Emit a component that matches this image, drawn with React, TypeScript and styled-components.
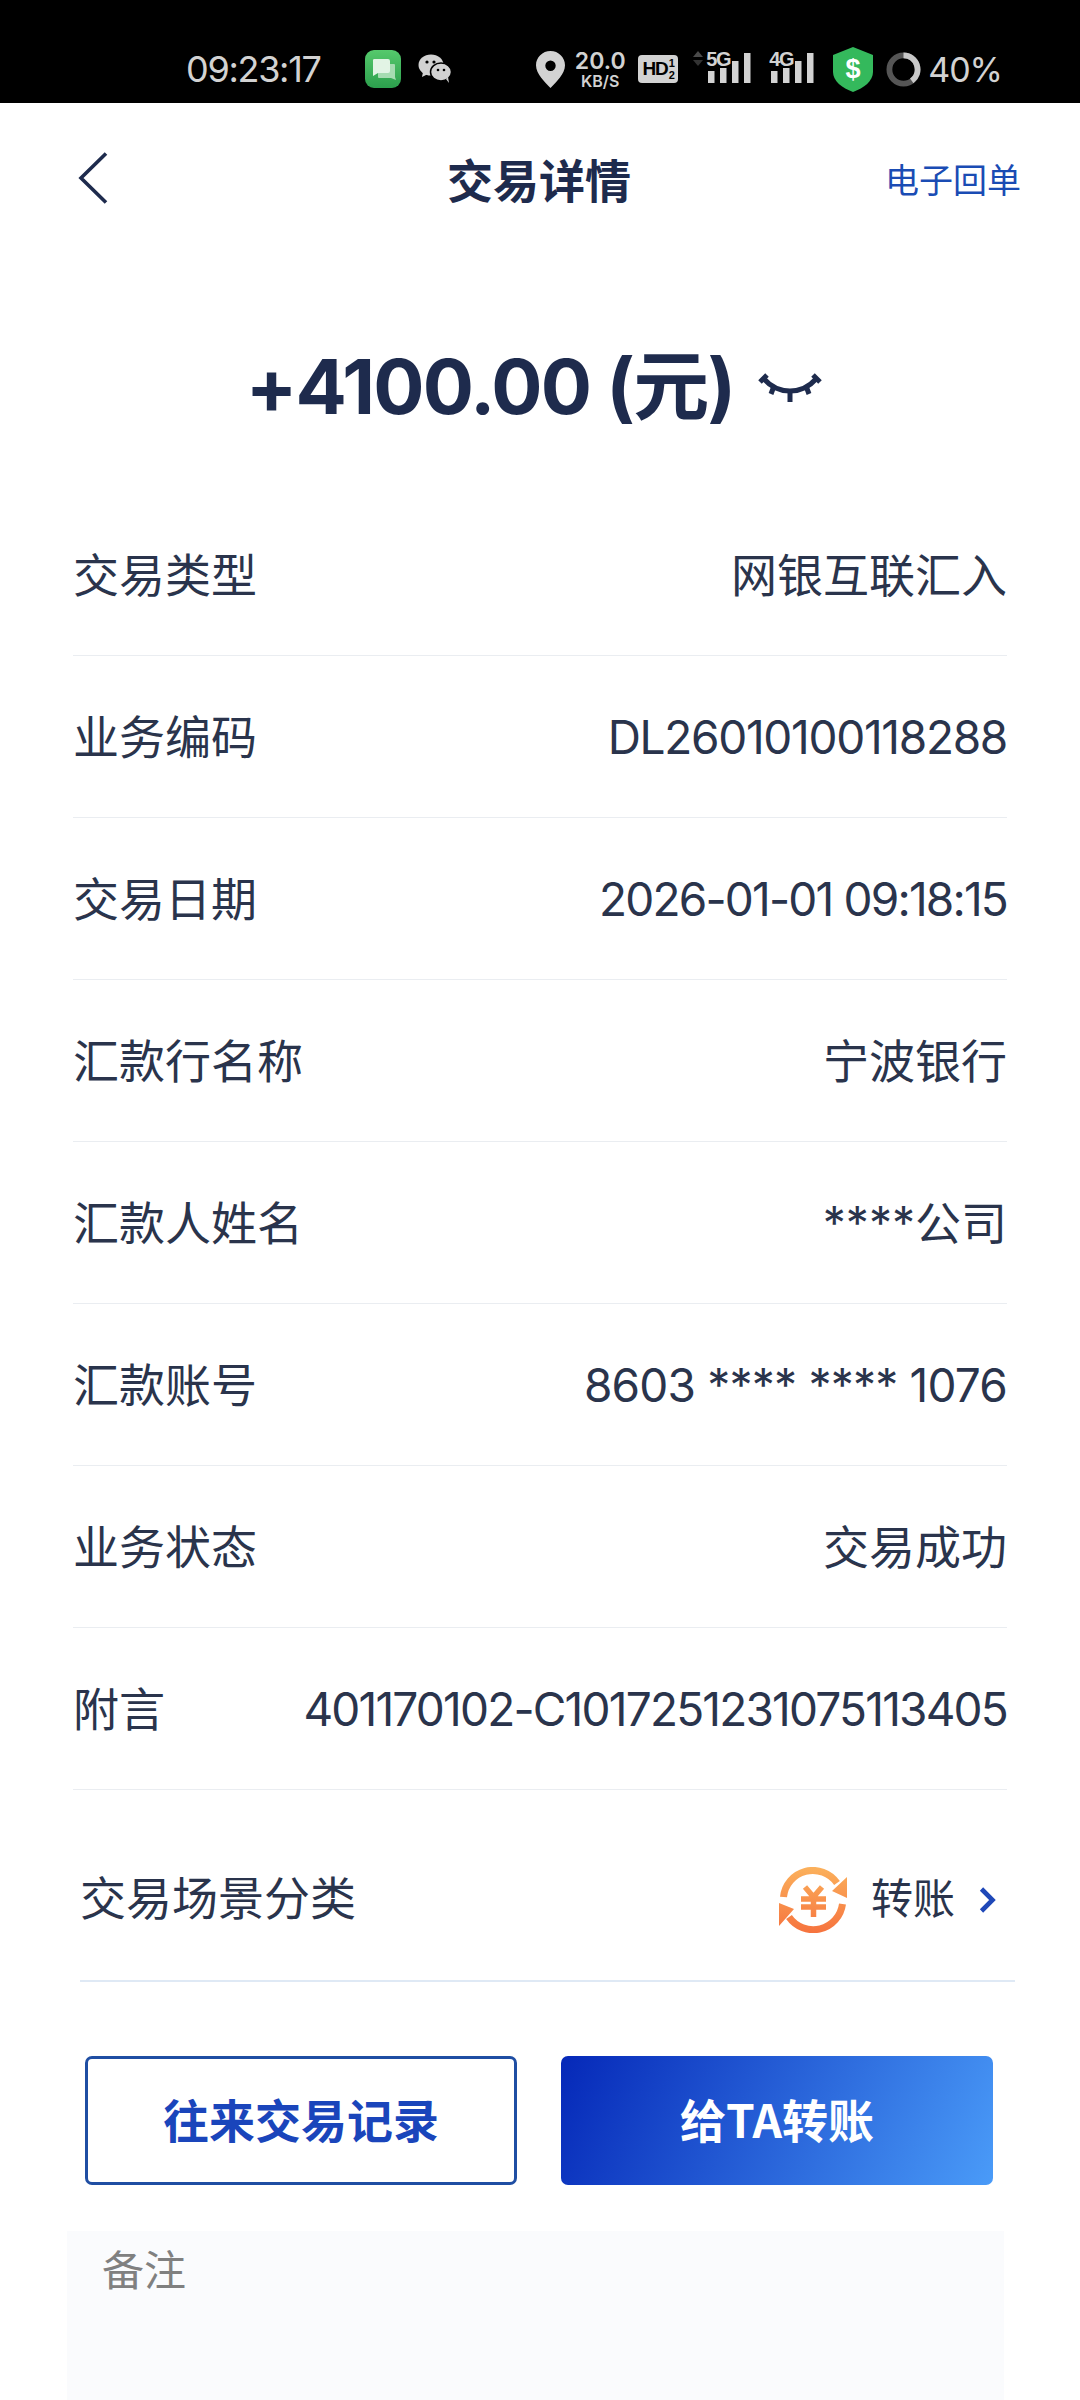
import React from 'react';
import styled, { createGlobalStyle } from 'styled-components';

const GlobalStyle = createGlobalStyle`
  html, body {
    margin: 0;
    padding: 0;
    background: #ffffff;
  }
  body {
    font-family: Roboto, "Noto Sans CJK SC", sans-serif;
  }
`;

const Page = styled.div`
  width: 1080px;
  height: 2400px;
  overflow: hidden;
  background: #ffffff;
  display: flex;
  flex-direction: column;
`;

const StatusBar = styled.div`
  height: 103px;
  flex: none;
  background: #000000;
  color: #d2d2d2;
  display: flex;
  align-items: center;
  justify-content: space-between;
  padding: 35px 78px 0 186px;
  box-sizing: border-box;
`;

const StatusGroup = styled.div`
  display: flex;
  align-items: center;
`;

const Clock = styled.span`
  font-family: Inter, sans-serif;
  font-size: 36px;
  letter-spacing: -1.3px;
  width: 179px;
`;

const Speed = styled.div`
  display: flex;
  flex-direction: column;
  align-items: center;
  width: 50px;
  margin: 0 13px 0 10px;
  font-family: Inter, sans-serif;
  font-weight: 600;
  line-height: 1;
`;

const SpeedValue = styled.span`
  font-size: 23px;
`;

const SpeedUnit = styled.span`
  font-size: 16px;
`;

const HdBadge = styled.div`
  width: 40px;
  height: 28px;
  border-radius: 4px;
  background: #d2d2d2;
  color: #000000;
  font-family: "Liberation Sans", sans-serif;
  font-weight: 700;
  letter-spacing: -1px;
  display: flex;
  align-items: center;
  justify-content: center;
  gap: 1px;
  margin-right: 15px;
`;

const HdText = styled.span`
  font-size: 19px;
`;

const HdFraction = styled.span`
  display: flex;
  flex-direction: column;
  align-items: center;
  font-size: 11px;
  line-height: 12px;
`;

const Signal = styled.div<{ $width: number }>`
  position: relative;
  width: ${(p) => p.$width}px;
  height: 32px;
  margin-right: 17px;
  top: -2px;
`;

const SignalLabel = styled.span`
  position: absolute;
  left: ${(p: { $left: number }) => p.$left}px;
  top: -1px;
  font-family: "Liberation Sans", sans-serif;
  font-size: 20px;
  font-weight: 700;
  letter-spacing: -1.2px;
  line-height: 18px;
`;

const Battery = styled.span`
  font-family: Inter, sans-serif;
  font-size: 34px;
  letter-spacing: -1px;
  margin-left: 7px;
`;

const NavBar = styled.div`
  height: 152px;
  flex: none;
  display: grid;
  grid-template-columns: 1fr auto 1fr;
  align-items: center;
  padding: 0 59px 2px 57px;
  box-sizing: border-box;
  color: #1e2b4d;
`;

const BackButton = styled.div`
  display: flex;
  align-items: center;
  padding-left: 21px;
`;

const NavTitle = styled.div`
  font-family: "Noto Sans CJK SC", sans-serif;
  font-size: 46px;
  font-weight: 700;
`;

const NavAction = styled.div`
  justify-self: end;
  font-family: "Noto Sans CJK SC", sans-serif;
  font-size: 34px;
  color: #1a4cb4;
`;

const Amount = styled.div`
  height: 239px;
  box-sizing: border-box;
  padding: 13px 12px 0 0;
  flex: none;
  display: flex;
  align-items: center;
  justify-content: center;
  gap: 24px;
  color: #1e2b4d;
`;

const AmountText = styled.span`
  font-family: Inter, "Noto Sans CJK SC", sans-serif;
  font-size: 76px;
  font-weight: 700;
  letter-spacing: -1.8px;
`;

const List = styled.div`
  padding: 0 73px;
`;

const Row = styled.div`
  height: 162px;
  box-sizing: border-box;
  display: flex;
  align-items: center;
  justify-content: space-between;
  border-bottom: 1px solid #eaedf1;
  color: #2a344c;
  font-size: 46px;
  font-family: Inter, "Noto Sans CJK SC", sans-serif;
`;

const RowLabel = styled.span`
  margin-bottom: 5px;
`;

const RowValue = styled.span<{ $tight: number; $raised: boolean }>`
  letter-spacing: ${(p) => p.$tight}px;
  margin-bottom: ${(p) => (p.$raised ? 5 : 0)}px;
`;

const SceneRow = styled.div`
  height: 192px;
  box-sizing: border-box;
  margin: 0 65px 0 80px;
  padding-top: 20px;
  display: flex;
  align-items: center;
  justify-content: space-between;
  border-bottom: 2px solid #dfe9f5;
  color: #2a344c;
  font-size: 46px;
  font-family: "Noto Sans CJK SC", sans-serif;
`;

const SceneValue = styled.div`
  display: flex;
  align-items: center;
  margin-right: 19px;
`;

const SceneName = styled.span`
  font-size: 42px;
  margin: 0 24px;
`;

const Actions = styled.div`
  display: flex;
  justify-content: space-between;
  margin: 74px 87px 0 85px;
`;

const ActionButton = styled.div<{ $primary?: boolean }>`
  width: 432px;
  height: 129px;
  box-sizing: border-box;
  border-radius: 7px;
  padding-bottom: 5px;
  display: flex;
  align-items: center;
  justify-content: center;
  font-family: "Noto Sans CJK SC", sans-serif;
  font-size: 46px;
  font-weight: 700;
  color: ${(p) => (p.$primary ? '#ffffff' : '#1a45bb')};
  background: ${(p) => (p.$primary ? 'linear-gradient(115deg, #0528b8 0%, #4a9bf8 100%)' : '#ffffff')};
  border: ${(p) => (p.$primary ? 'none' : '3px solid #1f4ea3')};
`;

const Remark = styled.div`
  flex: 1;
  margin: 46px 76px 0 67px;
  padding: 6px 35px;
  background: #fafbfd;
  color: #808080;
  font-family: "Noto Sans CJK SC", sans-serif;
  font-size: 42px;
`;

const rows: { label: string; value: string; tight: number; raised: boolean }[] = [
  { label: '交易类型', value: '网银互联汇入', tight: 0, raised: true },
  { label: '业务编码', value: 'DL26010100118288', tight: -1.3, raised: false },
  { label: '交易日期', value: '2026-01-01 09:18:15', tight: -1.8, raised: false },
  { label: '汇款行名称', value: '宁波银行', tight: 0, raised: true },
  { label: '汇款人姓名', value: '****公司', tight: 0, raised: true },
  { label: '汇款账号', value: '8603 **** **** 1076', tight: -0.8, raised: false },
  { label: '业务状态', value: '交易成功', tight: 0, raised: true },
  { label: '附言', value: '401170102-C1017251231075113405', tight: -1.8, raised: false },
];

const MessagesIcon = () => (
  <svg width="36" height="38" viewBox="0 0 36 38" style={{ marginRight: 17 }}>
    <defs>
      <linearGradient id="msgBg" x1="0" y1="0" x2="0" y2="1">
        <stop offset="0" stopColor="#55c96c" />
        <stop offset="1" stopColor="#2c9f4d" />
      </linearGradient>
    </defs>
    <rect width="36" height="38" rx="9" fill="url(#msgBg)" />
    <path d="M13 14h16a1 1 0 0 1 1 1v12l1 3-5-2H14a1 1 0 0 1-1-1z" fill="#a6dcb2" />
    <path d="M9 9h14a2 2 0 0 1 2 2v10a2 2 0 0 1-2 2H13l-5 3 0-4V11a1.500 1.500 0 0 1 1-2z" fill="#e2f4e5" />
  </svg>
);

const WechatIcon = () => (
  <svg width="34" height="30" viewBox="0 0 34 30">
    <ellipse cx="13" cy="11" rx="12.500" ry="10.500" fill="#d2d2d2" />
    <path d="M5 18l-1 5 6-3z" fill="#d2d2d2" />
    <ellipse cx="23" cy="18" rx="10.500" ry="9" fill="#d2d2d2" stroke="#000" strokeWidth="1.500" />
    <path d="M28 25l3 4-1-6z" fill="#d2d2d2" />
    <circle cx="9" cy="8" r="1.600" fill="#000" />
    <circle cx="16" cy="8" r="1.600" fill="#000" />
    <circle cx="20" cy="16" r="1.300" fill="#000" />
    <circle cx="26" cy="16" r="1.300" fill="#000" />
  </svg>
);

const PinIcon = () => (
  <svg width="29" height="37" viewBox="0 0 29 37">
    <path
      fillRule="evenodd"
      d="M14.500 0C6.500 0 0 6.300 0 14.200 0 23 9 31 14.500 37 20 31 29 23 29 14.200 29 6.300 22.500 0 14.500 0zm0 9.500a5.200 5.200 0 1 1 0 10.400 5.200 5.200 0 0 1 0-10.400z"
      fill="#d2d2d2"
    />
  </svg>
);

const SignalBars = () => (
  <svg width="44" height="30" viewBox="0 0 44 30" style={{ position: 'absolute', right: 0, bottom: 0 }}>
    <rect x="0" y="18" width="6.500" height="12" fill="#d2d2d2" />
    <rect x="12" y="15" width="6.500" height="15" fill="#d2d2d2" />
    <rect x="24" y="8" width="6.500" height="22" fill="#d2d2d2" />
    <rect x="36" y="0" width="6.500" height="30" fill="#d2d2d2" />
  </svg>
);

const DataArrows = () => (
  <svg width="10" height="15" viewBox="0 0 10 15" style={{ position: 'absolute', left: 0, top: 0 }}>
    <path d="M5 0l5 6H0z" fill="#4a4a4a" />
    <path d="M5 15l5-6H0z" fill="#333333" />
  </svg>
);

const ShieldIcon = () => (
  <svg width="40" height="45" viewBox="0 0 40 45" style={{ marginLeft: 1 }}>
    <path d="M20 0l20 8v17c0 9-9 16-20 20C9 41 0 34 0 25V8z" fill="#34b95c" />
    <text
      x="20"
      y="31"
      textAnchor="middle"
      fontFamily="Liberation Sans, sans-serif"
      fontWeight="700"
      fontSize="27"
      fill="#ffffff"
    >
      $
    </text>
  </svg>
);

const RingIcon = () => (
  <svg width="35" height="37" viewBox="0 0 36 38" style={{ marginLeft: 13 }}>
    <circle cx="18" cy="19" r="14.500" fill="none" stroke="#555555" strokeWidth="6" />
    <path d="M18 4.500A14.500 14.500 0 0 1 26.500 30.700" fill="none" stroke="#c8c8c8" strokeWidth="6" />
  </svg>
);

const BackIcon = () => (
  <svg width="30" height="52" viewBox="0 0 30 52">
    <path d="M28 1.500L3 26l25 24.500" fill="none" stroke="#1e2b4d" strokeWidth="3.600" />
  </svg>
);

const ClosedEyeIcon = () => (
  <svg width="64" height="30" viewBox="0 0 64 30" style={{ marginTop: 12 }}>
    <path d="M6 7c7 8 16 12 26 12S51 15 58 7" fill="none" stroke="#1e2b4d" strokeWidth="5" />
    <path d="M32 18v12M16 14l-3 8M48 14l3 8M2 10l7-7M62 10l-7-7" fill="none" stroke="#1e2b4d" strokeWidth="5" />
  </svg>
);

const TransferIcon = () => (
  <svg width="68" height="66" viewBox="0 0 68 66" style={{ marginTop: 10 }}>
    <defs>
      <linearGradient id="transferFill" gradientUnits="userSpaceOnUse" x1="0" y1="0" x2="0" y2="66">
        <stop offset="0" stopColor="#fbb15c" />
        <stop offset="1" stopColor="#f6733e" />
      </linearGradient>
    </defs>
    <path d="M4.500 30A29.500 29.500 0 0 1 58 16" fill="none" stroke="url(#transferFill)" strokeWidth="7" />
    <path d="M63.500 37A29.500 29.500 0 0 1 10 50" fill="none" stroke="url(#transferFill)" strokeWidth="7" />
    <path d="M68 10v21L53 24zM0 59V36l15 6z" fill="url(#transferFill)" />
    <path
      d="M26 20l8.500 10L43 20M22 32h25M22 40h25M34.500 30v20"
      fill="none"
      stroke="url(#transferFill)"
      strokeWidth="5.500"
    />
  </svg>
);

const SmallChevron = () => (
  <svg width="17" height="26" viewBox="0 0 17 26" style={{ marginTop: 10 }}>
    <path d="M2.500 2L13.500 13 2.500 24" fill="none" stroke="#1f48b8" strokeWidth="4.600" />
  </svg>
);

export default function App() {
  return (
    <Page>
      <GlobalStyle />
      <StatusBar>
        <StatusGroup>
          <Clock>09:23:17</Clock>
          <MessagesIcon />
          <WechatIcon />
        </StatusGroup>
        <StatusGroup>
          <PinIcon />
          <Speed>
            <SpeedValue>20.0</SpeedValue>
            <SpeedUnit>KB/S</SpeedUnit>
          </Speed>
          <HdBadge>
            <HdText>HD</HdText>
            <HdFraction>
              <span>1</span>
              <span>2</span>
            </HdFraction>
          </HdBadge>
          <Signal $width={59}>
            <DataArrows />
            <SignalLabel $left={13}>5G</SignalLabel>
            <SignalBars />
          </Signal>
          <Signal $width={46}>
            <SignalLabel $left={0}>4G</SignalLabel>
            <SignalBars />
          </Signal>
          <ShieldIcon />
          <RingIcon />
          <Battery>40%</Battery>
        </StatusGroup>
      </StatusBar>

      <NavBar>
        <BackButton>
          <BackIcon />
        </BackButton>
        <NavTitle>交易详情</NavTitle>
        <NavAction>电子回单</NavAction>
      </NavBar>

      <Amount>
        <AmountText>+4100.00 (元)</AmountText>
        <ClosedEyeIcon />
      </Amount>

      <List>
        {rows.map((row) => (
          <Row key={row.label}>
            <RowLabel>{row.label}</RowLabel>
            <RowValue $tight={row.tight} $raised={row.raised}>
              {row.value}
            </RowValue>
          </Row>
        ))}
      </List>

      <SceneRow>
        <span>交易场景分类</span>
        <SceneValue>
          <TransferIcon />
          <SceneName>转账</SceneName>
          <SmallChevron />
        </SceneValue>
      </SceneRow>

      <Actions>
        <ActionButton>往来交易记录</ActionButton>
        <ActionButton $primary>给TA转账</ActionButton>
      </Actions>

      <Remark>备注</Remark>
    </Page>
  );
}
